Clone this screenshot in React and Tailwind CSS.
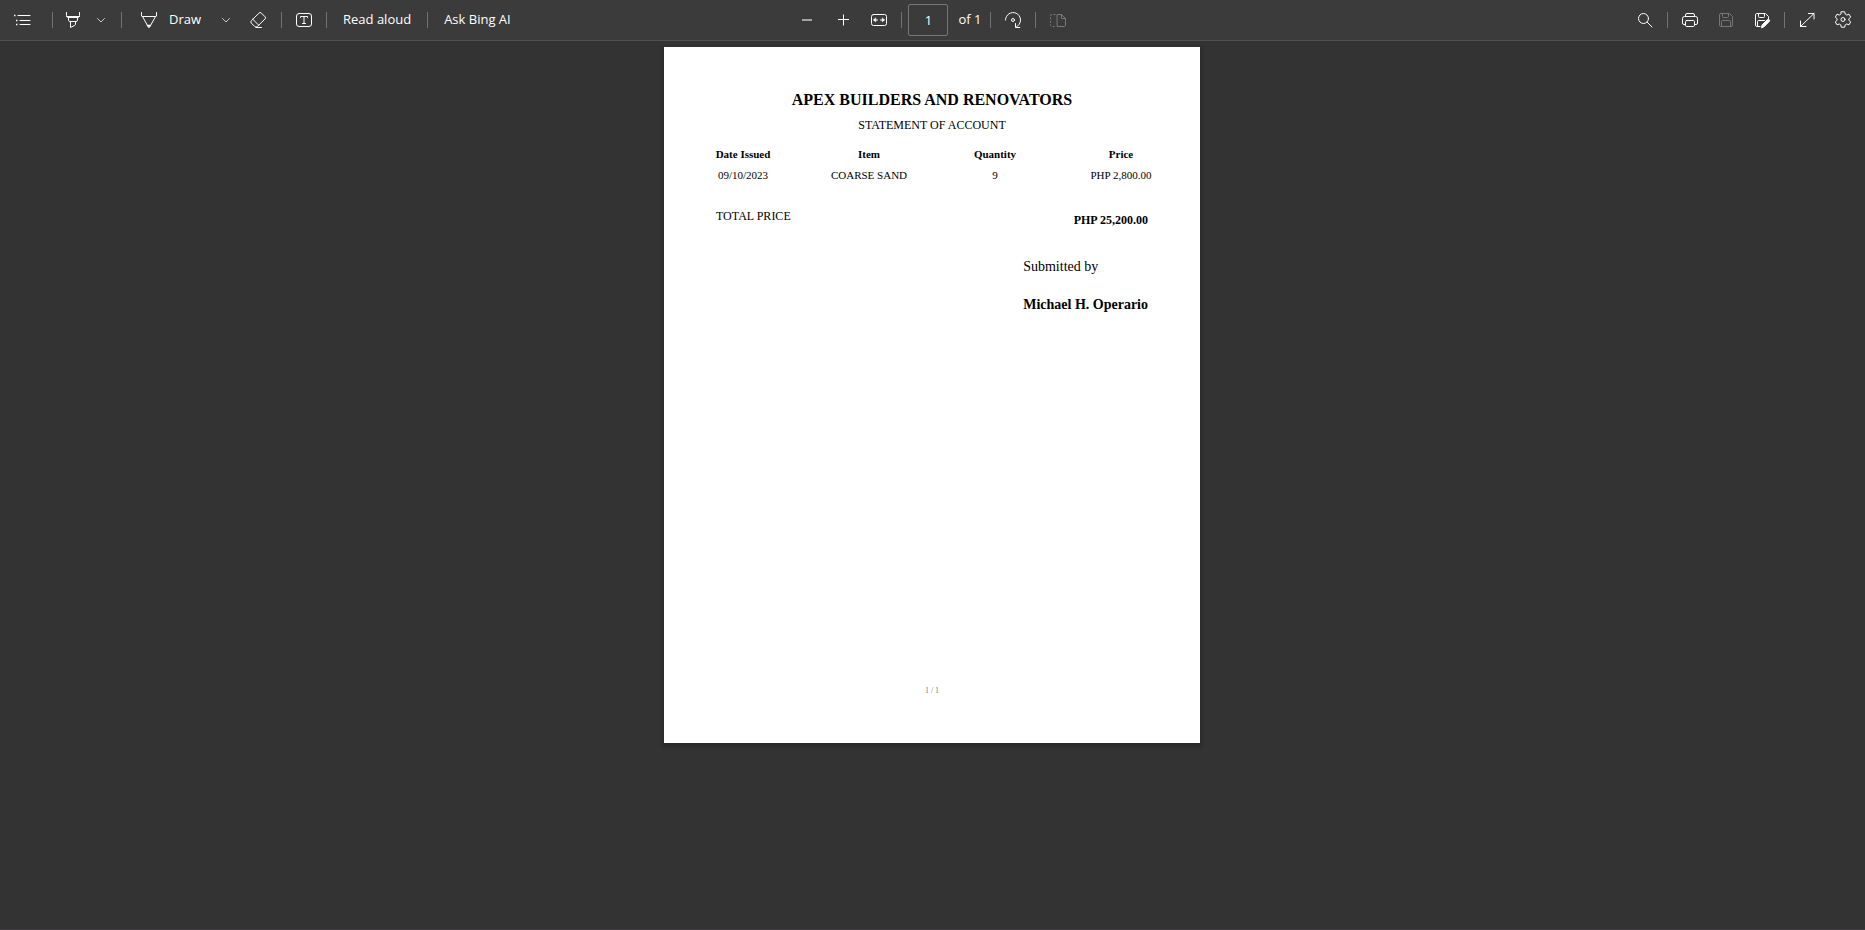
const S = ({ children, className = '', size = 20 }) => (
  <svg
    width={size}
    height={size}
    viewBox="0 0 20 20"
    fill="none"
    stroke="currentColor"
    strokeWidth="1"
    strokeLinecap="round"
    strokeLinejoin="round"
    aria-hidden="true"
    className={`shrink-0 ${className}`}
  >
    {children}
  </svg>
);

const ListIcon = () => (
  <S>
    <path d="M6 5.5h12M8 10.5h10M8 14.5h10" />
    <path d="M2 5.5h1.500M4 10.500h1.500M4 14.500h1.500" strokeWidth="1.6" strokeLinecap="butt" />
  </S>
);

const HighlighterIcon = () => (
  <S>
    <path d="M3.500 2.500v3.200c0 1 .6 1.800 1.500 1.800h10c.9 0 1.500-.8 1.500-1.800V2.500M3.500 6.500h13M5.500 7.500v2.700c0 .8.5 1.300 1.300 1.300h6.400c.8 0 1.300-.5 1.300-1.300V7.500M7.500 11.500v6l4.300-2.200c.5-.3.700-.6.700-1.100v-2.700" />
  </S>
);

const PenIcon = () => (
  <S>
    <path d="M2.500 2.500v3.600l1 .4h13l1-.4V2.500M3.500 6.500l5.600 10.200c.4.700 1.400.7 1.800 0L16.500 6.500" />
    <path d="M8.300 15h3.400l-1.700 2.500z" fill="currentColor" strokeWidth=".5" />
  </S>
);

const ChevronIcon = () => (
  <S className="text-[#c8c8c8]">
    <path d="M6.500 8.500l3.500 3.500 3.500-3.500" />
  </S>
);

const EraserIcon = () => (
  <S>
    <path d="M11.200 2.900a1.400 1.400 0 0 1 2 0l3.900 3.900a1.400 1.400 0 0 1 0 2l-7.600 7.600a2 2 0 0 1-2.900 0l-3.300-3.300a1.600 1.600 0 0 1 0-2.300zM4.800 9.300l5.900 5.900M8 17.500h5.500" />
  </S>
);

const TextBoxIcon = () => (
  <S>
    <rect x="2.500" y="3.500" width="15" height="13" rx="2.500" />
    <path d="M6.500 7.500v-1h7v1M10 6.500v7M8.500 13.500h3" />
  </S>
);

const MinusIcon = () => (
  <S className="text-[#dedede]">
    <path d="M5 10h10" strokeWidth="1.300" strokeLinecap="butt" />
  </S>
);

const PlusIcon = () => (
  <S>
    <path d="M10.500 4.500v11M5 9.500h11" strokeLinecap="butt" />
  </S>
);

const FitIcon = () => (
  <S>
    <rect x="2.500" y="4.500" width="15" height="11" rx="2" />
    <path d="M5 10h3.500M11.500 10H15" />
    <path d="M6.800 8v4l-2.300-2zM13.200 8v4l2.300-2z" fill="currentColor" strokeWidth=".4" />
  </S>
);

const RotateIcon = () => (
  <S>
    <path d="M2.500 10a7.500 7.500 0 1 1 12.300 5.800l-1.600 1.400M12.500 13.500v4h4.300" />
    <circle cx="10" cy="10" r="1.500" />
  </S>
);

const PageViewIcon = () => (
  <S className="text-[#7a7a7a]">
    <path d="M9.500 4.500h4l4 4v6.500c0 .8-.7 1.500-1.500 1.500H9.500zM13.500 4.500v4h4" />
    <path d="M7.500 4.500H4A1.500 1.500 0 0 0 2.500 6v9A1.500 1.500 0 0 0 4 16.500h3.500" strokeDasharray="2 1.500" strokeLinecap="butt" />
  </S>
);

const SearchIcon = () => (
  <S>
    <circle cx="8.500" cy="8.500" r="5" />
    <path d="M12.300 12.300L17 17" />
  </S>
);

const PrintIcon = () => (
  <S>
    <path d="M5.500 14.500H4A1.500 1.500 0 0 1 2.500 13V8.500a2 2 0 0 1 2-2h11a2 2 0 0 1 2 2V13a1.500 1.500 0 0 1-1.500 1.500h-1.500" />
    <path d="M5.500 6.500v-1.500A1.500 1.500 0 0 1 7 3.500h6A1.500 1.500 0 0 1 14.500 5v1.500" />
    <rect x="5.500" y="10.500" width="9" height="6" rx="1.200" />
  </S>
);

const SaveIcon = () => (
  <S className="text-[#767676]">
    <path d="M4.500 3.500h9l3 3v8.500a1.500 1.500 0 0 1-1.500 1.500H4.500A1.500 1.500 0 0 1 3.500 15V5a1.500 1.500 0 0 1 1-1.500z" />
    <path d="M6.500 3.500V6.500a1 1 0 0 0 1 1h4a1 1 0 0 0 1-1V3.500M5.500 16.500v-5a1 1 0 0 1 1-1h7a1 1 0 0 1 1 1v5" />
  </S>
);

const SaveAsIcon = () => (
  <S>
    <path d="M8 16.500H4.500A1.500 1.500 0 0 1 3.500 15V5a1.500 1.500 0 0 1 1-1.500h9l3 3V9" />
    <path d="M6.500 3.500V6.500a1 1 0 0 0 1 1h4a1 1 0 0 0 1-1V3.500M5.500 16.500v-5a1 1 0 0 1 1-1h6" />
    <path d="M9.500 17.500l.7-2.700 5.100-5.100a1.200 1.200 0 0 1 1.900 1.900l-5.100 5.100z" fill="currentColor" />
  </S>
);

const ExpandIcon = () => (
  <S>
    <path d="M11.500 3.500h5.500v5.500M17 3.500L3.500 16.500M3.500 11v5.500H9" />
  </S>
);

const GearIcon = () => (
  <S>
    <circle cx="10" cy="9.500" r="2" />
    <path d="M8.300 1.800h3.400l.5 2.300 1.500.9 2.300-.8 1.700 2.900-1.800 1.600v1.600l1.800 1.600-1.700 2.900-2.300-.8-1.500.9-.5 2.300H8.300l-.5-2.300-1.500-.9-2.300.8-1.700-2.900 1.800-1.600V8.700L2.300 7.100 4 4.200l2.300.8 1.500-.9z" />
  </S>
);

const Sep = () => <span className="h-4 w-px shrink-0 bg-[#737373]" />;

const Btn = ({ label, children, className = 'w-9', disabled }) => (
  <button
    type="button"
    aria-label={label}
    disabled={disabled}
    className={`flex h-8 shrink-0 items-center justify-center ${className}`}
  >
    {children}
  </button>
);

const rows = [{ date: '09/10/2023', item: 'COARSE SAND', qty: '9', price: 'PHP 2,800.00' }];

export default function App() {
  return (
    <div className="flex min-h-screen flex-col border-b border-[#453f44] bg-[#333333]">
      <header className="grid grid-cols-[1fr_auto_1fr] items-center border-b border-[#505050] bg-[#3b3b3b] px-1 font-['Open_Sans',sans-serif] text-[13px] text-white">
        <div className="flex h-10 items-center">
          <Btn label="Contents"><ListIcon /></Btn>
          <span className="w-3" />
          <Sep />
          <span className="w-1" />
          <Btn label="Highlight" className="w-8"><HighlighterIcon /></Btn>
          <Btn label="Highlight options" className="w-6"><ChevronIcon /></Btn>
          <span className="w-2" />
          <Sep />
          <span className="w-2" />
          <Btn label="Draw" className="w-20 gap-2.5">
            <PenIcon />
            <span>Draw</span>
          </Btn>
          <Btn label="Draw options" className="w-8"><ChevronIcon /></Btn>
          <Btn label="Erase" className="w-8"><EraserIcon /></Btn>
          <span className="w-[7px]" />
          <Sep />
          <span className="w-1" />
          <Btn label="Add text"><TextBoxIcon /></Btn>
          <span className="w-1" />
          <Sep />
          <span className="w-4" />
          <Btn label="Read aloud" className="w-auto"><span>Read aloud</span></Btn>
          <span className="w-4" />
          <Sep />
          <span className="w-4" />
          <Btn label="Ask Bing AI" className="w-auto"><span>Ask Bing AI</span></Btn>
        </div>

        <div className="flex h-10 items-center">
          <Btn label="Zoom out"><MinusIcon /></Btn>
          <Btn label="Zoom in"><PlusIcon /></Btn>
          <Btn label="Fit to width"><FitIcon /></Btn>
          <span className="w-1" />
          <Sep />
          <label className="ml-1.5 flex items-center gap-2.5">
            <input
              type="text"
              aria-label="Page number"
              defaultValue="1"
              className="h-8 w-10 rounded-xs border border-[#767676] bg-transparent text-center outline-none"
            />
            <span>of 1</span>
          </label>
          <span className="w-2" />
          <Sep />
          <span className="w-1" />
          <Btn label="Rotate"><RotateIcon /></Btn>
          <span className="w-1" />
          <Sep />
          <span className="w-1" />
          <Btn label="Page view" disabled><PageViewIcon /></Btn>
        </div>

        <div className="flex h-10 items-center justify-end">
          <Btn label="Search"><SearchIcon /></Btn>
          <span className="w-1" />
          <Sep />
          <span className="w-1" />
          <Btn label="Print"><PrintIcon /></Btn>
          <Btn label="Save" disabled><SaveIcon /></Btn>
          <Btn label="Save as"><SaveAsIcon /></Btn>
          <span className="w-1" />
          <Sep />
          <span className="w-1" />
          <Btn label="Full screen"><ExpandIcon /></Btn>
          <Btn label="Settings"><GearIcon /></Btn>
        </div>
      </header>

      <main className="flex justify-center pt-1.5 pr-px">
        <article className="flex aspect-[536/696] w-full max-w-[536px] flex-col bg-white px-4 pt-[41px] pb-[46px] font-['Liberation_Serif',serif] text-black shadow-[0_2px_4px_2px_rgba(0,0,0,0.2)]">
          <h1 className="text-center text-base leading-6 font-bold">APEX BUILDERS AND RENOVATORS</h1>
          <h2 className="text-center text-[12px] leading-[26px]">STATEMENT OF ACCOUNT</h2>
          <table className="mt-1.5 w-full table-fixed text-center text-[11px] leading-[21px]">
            <thead>
              <tr>
                <th>Date Issued</th>
                <th>Item</th>
                <th>Quantity</th>
                <th>Price</th>
              </tr>
            </thead>
            <tbody>
              {rows.map((r) => (
                <tr key={r.date}>
                  <td>{r.date}</td>
                  <td>{r.item}</td>
                  <td>{r.qty}</td>
                  <td>{r.price}</td>
                </tr>
              ))}
            </tbody>
          </table>
          <div className="mt-5 flex justify-between px-9 text-[12px] leading-5">
            <p>TOTAL PRICE</p>
            <p className="pt-1 font-bold">PHP 25,200.00</p>
          </div>
          <div className="mt-7 flex flex-col gap-5 self-end pr-9 text-[14px] leading-[18px]">
            <p>Submitted by</p>
            <p className="font-bold">Michael H. Operario</p>
          </div>
          <footer className="mt-auto text-center text-[8px] leading-3 text-[#808080]">1 / 1</footer>
        </article>
      </main>
    </div>
  );
}
